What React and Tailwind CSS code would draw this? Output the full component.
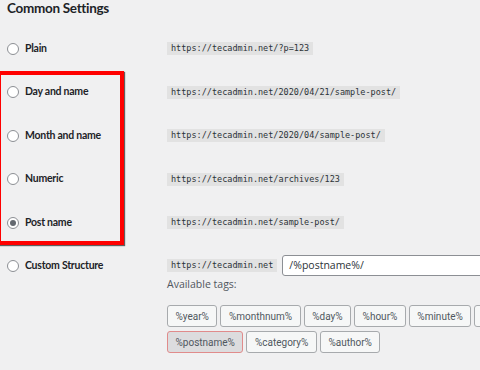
import React from "react";

const rows = [
  { label: "Plain", url: "https://tecadmin.net/?p=123" },
  { label: "Day and name", url: "https://tecadmin.net/2020/04/21/sample-post/" },
  { label: "Month and name", url: "https://tecadmin.net/2020/04/sample-post/" },
  { label: "Numeric", url: "https://tecadmin.net/archives/123" },
  { label: "Post name", url: "https://tecadmin.net/sample-post/", checked: true },
];

const tags1 = ["%year%", "%monthnum%", "%day%", "%hour%", "%minute%", "%second%"];
const tags2 = ["%postname%", "%category%", "%author%"];

function Radio({ checked }) {
  return (
    <span className="w-[12px] h-[12px] rounded-full border border-[#8c8f94] bg-white flex items-center justify-center shrink-0">
      {checked && <span className="w-[6px] h-[6px] rounded-full bg-[#646970]" />}
    </span>
  );
}

function Code({ children }) {
  return (
    <span className="bg-[#e2e2e2] h-[13px] px-[4px] flex items-center shrink-0 text-[8.5px] text-[#2c3338] font-['DejaVu_Sans_Mono',monospace] whitespace-nowrap">
      {children}
    </span>
  );
}

function Tag({ children, active }) {
  return (
    <span
      className={
        "h-[22px] px-[7.5px] flex items-center rounded-[3px] border text-[10px] text-[#50575e] whitespace-nowrap shrink-0 font-['Roboto',sans-serif] " +
        (active ? "bg-[#dcdcde] border-[#e08b8b]" : "bg-[#f6f7f7] border-[#a7aaad]")
      }
    >
      {children}
    </span>
  );
}

function Label({ children }) {
  return <span className="text-[10.5px] font-bold tracking-[-0.25px] whitespace-nowrap font-['Lato',sans-serif]">{children}</span>;
}

export default function App() {
  return (
    <div className="relative w-[480px] h-[370px] overflow-hidden bg-[#f0f0f1] font-['Lato',sans-serif] text-[#1d2327]">
      <div className="pl-[7px]">
        <div className="h-[26.75px] text-[13.5px] font-bold leading-[17px] tracking-[-0.3px]">Common Settings</div>
        {rows.map((r) => (
          <div key={r.label} className="h-[43.5px] flex items-center">
            <div className="w-[160px] shrink-0 flex items-center gap-[6px]">
              <Radio checked={r.checked} />
              <Label>{r.label}</Label>
            </div>
            <Code>{r.url}</Code>
          </div>
        ))}
        <div className="flex pt-[11px]">
          <div className="w-[160px] shrink-0 h-[21px] flex items-center gap-[6px]">
            <Radio />
            <Label>Custom Structure</Label>
          </div>
          <div className="flex flex-col">
            <div className="flex items-center gap-[5px] h-[21px]">
              <Code>https://tecadmin.net</Code>
              <div className="w-[220px] shrink-0 h-[21px] bg-white border border-[#8c8f94] rounded-[3px] flex items-center px-[6px] text-[10.5px] text-[#2c3338] font-['Open_Sans',sans-serif]">
                /%postname%/
              </div>
            </div>
            <div className="mt-[2px] h-[14px] flex items-center text-[10.5px] text-[#50575e] font-['Open_Sans',sans-serif]">Available tags:</div>
            <div className="mt-[13px] flex gap-[3px]">
              {tags1.map((t) => (
                <Tag key={t}>{t}</Tag>
              ))}
            </div>
            <div className="mt-[4px] flex gap-[3px]">
              {tags2.map((t) => (
                <Tag key={t} active={t === "%postname%"}>{t}</Tag>
              ))}
            </div>
          </div>
        </div>
      </div>
      <div className="absolute left-[-3px] top-[71px] w-[127px] h-[174px] border-[4px] border-[#ff0000] shadow-[1px_1px_1px_rgba(0,0,0,0.6)] pointer-events-none" />
    </div>
  );
}
